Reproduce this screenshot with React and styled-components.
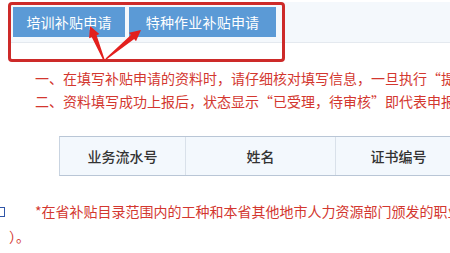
import React from "react";
import styled, { createGlobalStyle } from "styled-components";

const Global = createGlobalStyle`
  html, body {
    margin: 0;
    padding: 0;
    background: #ffffff;
    overflow: hidden;
  }
  body {
    font-family: "Noto Sans CJK SC", "Microsoft YaHei", sans-serif;
    font-size: 14px;
  }
`;

const Page = styled.div`
  position: relative;
  width: 450px;
  height: 253px;
  overflow: hidden;
  padding-top: 2px;
  box-sizing: border-box;
`;

const TabBar = styled.div`
  display: flex;
  gap: 4px;
  margin-left: 11px;
  height: 41px;
  padding: 5px 0 0 2px;
  box-sizing: border-box;
  background: #f4f8fc;
  border-bottom: 1px solid #e4e9ef;
`;

const Tab = styled.div`
  width: ${(p) => p.w}px;
  height: 30px;
  display: flex;
  align-items: center;
  justify-content: center;
  background: #5b9ad6;
  color: #ffffff;
  font-size: 14px;
  letter-spacing: 0.2px;
  white-space: nowrap;
`;

const Notices = styled.div`
  margin-top: 24px;
  padding-left: 35px;
  color: #d3372f;
  font-size: 14px;
  line-height: 23px;
  white-space: nowrap;
`;

const Line = styled.div``;

const Table = styled.div`
  display: grid;
  grid-template-columns: 126px 150px 126px 126px;
  margin: 23px 0 0 59px;
  height: 40px;
  background: #f3f8fd;
  border-top: 1px solid #b9c6d6;
  border-bottom: 1px solid #b9c6d6;
  border-left: 1px solid #c9d4e1;
  box-sizing: border-box;
  width: 600px;
`;

const HeadCell = styled.div`
  display: flex;
  align-items: center;
  justify-content: center;
  color: #333333;
  font-size: 14px;
  font-weight: 500;
  border-right: 1px solid #d9e1ea;
  white-space: nowrap;
`;

const Note = styled.div`
  margin-top: 23px;
  color: #d3372f;
  font-size: 14px;
  line-height: 25px;
  white-space: nowrap;
`;

const NoteFirst = styled.div`
  display: flex;
  align-items: center;
`;

const Box = styled.span`
  flex-shrink: 0;
  display: inline-block;
  width: 9px;
  height: 10px;
  margin-left: -4px;
  margin-right: 30px;
  border: 1px solid #2f55a8;
  box-sizing: border-box;
`;

const NoteTail = styled.div`
  padding-left: 9px;
`;

const Highlight = styled.div`
  position: absolute;
  left: 8px;
  top: 2px;
  width: 277px;
  height: 60px;
  border: 3px solid #cd2a29;
  border-radius: 4px;
  box-sizing: border-box;
  pointer-events: none;
`;

const Arrows = styled.svg`
  position: absolute;
  left: 0;
  top: 0;
  pointer-events: none;
`;

// tapered arrow polygon from base to tip
const arrow = (bx, by, tx, ty) => {
  const dx = tx - bx;
  const dy = ty - by;
  const len = Math.hypot(dx, dy);
  const ux = dx / len;
  const uy = dy / len;
  const nx = -uy;
  const ny = ux;
  const head = 11;
  const hw = 5.5;
  const sw0 = 0.8;
  const sw1 = 2.6;
  const hx = tx - ux * head;
  const hy = ty - uy * head;
  const pts = [
    [bx + nx * sw0, by + ny * sw0],
    [hx + nx * sw1, hy + ny * sw1],
    [hx + nx * hw, hy + ny * hw],
    [tx, ty],
    [hx - nx * hw, hy - ny * hw],
    [hx - nx * sw1, hy - ny * sw1],
    [bx - nx * sw0, by - ny * sw0],
  ];
  return pts.map((p) => p.map((v) => v.toFixed(1)).join(",")).join(" ");
};

const App = () => {
  return (
    <>
      <Global />
      <Page>
        <TabBar>
          <Tab w={112}>培训补贴申请</Tab>
          <Tab w={147}>特种作业补贴申请</Tab>
        </TabBar>
        <Notices>
          <Line>一、在填写补贴申请的资料时，请仔细核对填写信息，一旦执行“提交”后将无法修改。</Line>
          <Line>二、资料填写成功上报后，状态显示“已受理，待审核”即代表申报成功。</Line>
        </Notices>
        <Table>
          <HeadCell>业务流水号</HeadCell>
          <HeadCell>姓名</HeadCell>
          <HeadCell>证书编号</HeadCell>
          <HeadCell>状态</HeadCell>
        </Table>
        <Note>
          <NoteFirst>
            <Box />
            *在省补贴目录范围内的工种和本省其他地市人力资源部门颁发的职业资格证书
          </NoteFirst>
          <NoteTail>）。</NoteTail>
        </Note>
        <Highlight />
        <Arrows width="450" height="253" viewBox="0 0 450 253">
          <polygon points={arrow(104, 60, 90, 26)} fill="#e3201e" />
          <polygon points={arrow(106, 59, 141, 30)} fill="#e3201e" />
        </Arrows>
      </Page>
    </>
  );
};

export default App;
